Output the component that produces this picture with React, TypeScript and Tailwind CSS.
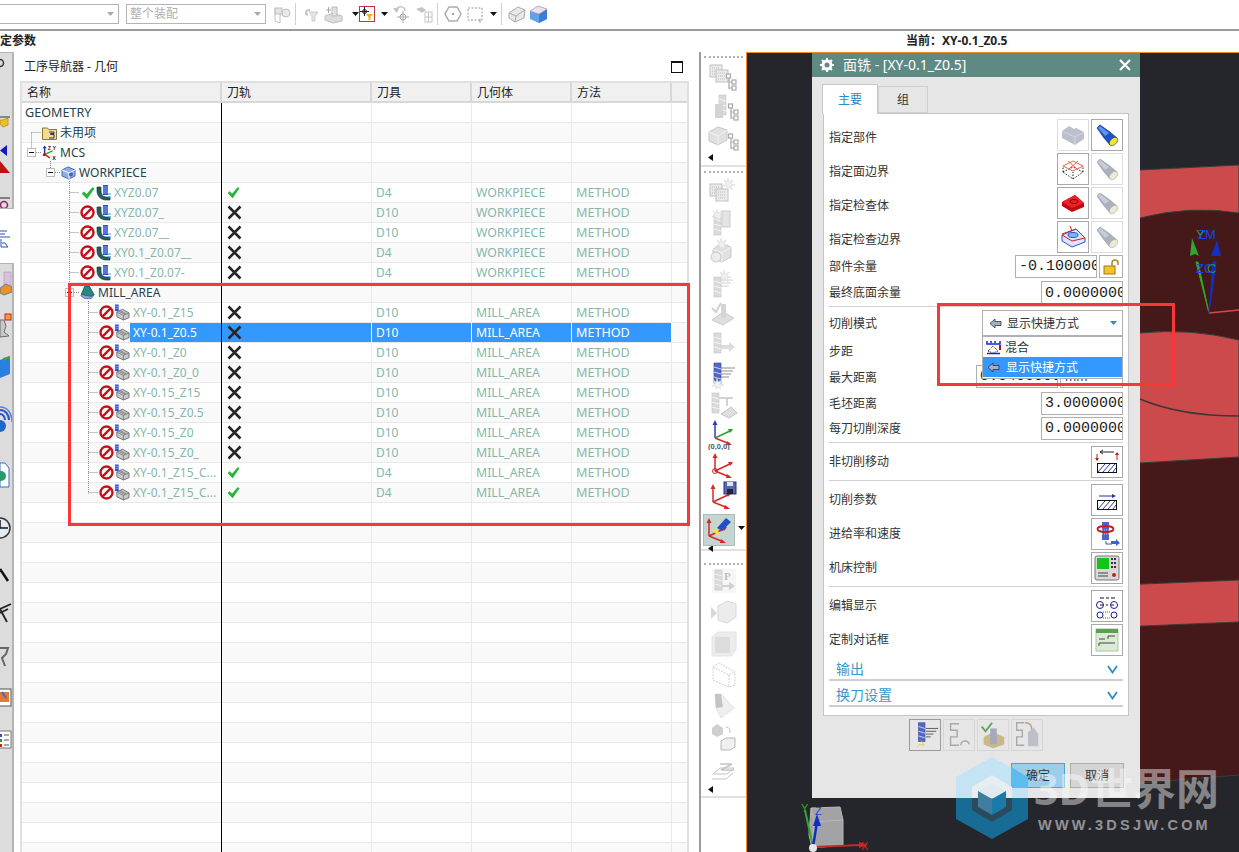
import type { ReactNode } from 'react';

type Kind = 'root' | 'lvl1' | 'work' | 'op' | 'mill' | 'sub';
type Status = 'ok' | 'no' | 'none';

type TreeRow = {
  kind: Kind;
  name: string;
  state?: Status;
  path?: Status;
  tool?: string;
  geom?: string;
  icon?: ReactNode;
  selected?: boolean;
};

const indent: Record<Kind, string> = {
  root: 'pl-[3px] pt-[1px] text-[12.6px]',
  lvl1: 'pl-[20px]',
  work: 'pl-[39px]',
  op: 'pl-[58px]',
  mill: 'pl-[58px]',
  sub: 'pl-[77px]',
};

const Prohibit = () => (
  <svg width="15" height="15" viewBox="0 0 15 15" className="flex-none">
    <circle cx="7.5" cy="7.5" r="6" fill="#fff" stroke="#c4121c" strokeWidth="2.4" />
    <path d="M3.4 11.6 11.6 3.4" stroke="#c4121c" strokeWidth="2.4" />
  </svg>
);

const GreenCheck = ({ size = 14 }: { size?: number }) => (
  <svg width={size} height={size} viewBox="0 0 14 14" className="flex-none">
    <path d="M1 7.5 3 5.8 5.5 8.6 11.5 1.5 13.2 2.5 6 12.8Z" fill="#1fbb35" stroke="#128a24" strokeWidth=".4" />
  </svg>
);

const Cross = () => (
  <svg width="15" height="15" viewBox="0 0 15 15" className="flex-none">
    <path d="M1.5 1.5 13.5 13.5M13.5 1.5 1.5 13.5" stroke="#262626" strokeWidth="2.5" />
  </svg>
);

const OpBlue = () => (
  <svg width="15" height="16" viewBox="0 0 15 16" className="flex-none">
    <path d="M1 2v4c0 5 4 9 9 9h4v-3h-4c-3 0-5-3-5-6V2Z" fill="#1f5f5c" stroke="#0d2f30" strokeWidth=".6" />
    <rect x="7" y="0" width="5" height="10" fill="#2b4fd0" />
    <path d="M7 2h5M7 4h5M7 6h5M7 8h5" stroke="#9fc0ff" strokeWidth=".7" />
    <path d="M12 9h3M12 12h3" stroke="#2aa0e8" strokeWidth="1" />
  </svg>
);

const OpGrey = () => (
  <svg width="16" height="17" viewBox="0 0 17 17" className="flex-none">
    <path d="M3 8 9 5 16 9 16 14 10 16.5 3 13Z" fill="#c9c9c9" stroke="#555" strokeWidth=".8" />
    <path d="M3 8 10 11.5 16 9M10 11.5V16.5M7 6.5 13 10M5.5 7.2 11.5 10.6" stroke="#666" strokeWidth=".7" fill="none" />
    <rect x="1" y="0" width="4" height="7" fill="#3a50c8" />
    <path d="M1 2h4M1 4h4" stroke="#a9bcff" strokeWidth=".7" />
  </svg>
);

const FolderIcon = () => (
  <svg width="15" height="14" viewBox="0 0 15 14" className="flex-none">
    <path d="M.5 2h5l1 1.5h8v10H.5Z" fill="#f4dc8a" stroke="#8a7a3a" />
    <path d="M7 6h5v1.5H8.5V8.5H12V12H7" fill="none" stroke="#26327a" strokeWidth="1" />
  </svg>
);

const McsIcon = () => (
  <svg width="15" height="16" viewBox="0 0 17 17" className="flex-none">
    <path d="M3 10V2" stroke="#1a2fb8" strokeWidth="1.6" />
    <path d="M3 0 .8 3h4.4Z" fill="#1a2fb8" />
    <path d="M3 10 12 6" stroke="#2aa52a" strokeWidth="1.6" />
    <path d="M3 10 9 14" stroke="#c41a1a" strokeWidth="1.6" />
    <rect x="1" y="9" width="3" height="3" fill="#c41a1a" />
    <text x="6.5" y="5" fontSize="6" fontWeight="700" fontFamily="Liberation Sans" fill="#111">Z</text>
    <text x="12" y="5.5" fontSize="6" fontWeight="700" fontFamily="Liberation Sans" fill="#111">Y</text>
    <text x="11.5" y="16" fontSize="6" fontWeight="700" fontFamily="Liberation Sans" fill="#111">X</text>
  </svg>
);

const WorkIcon = () => (
  <svg width="15" height="14" viewBox="0 0 15 14" className="flex-none">
    <path d="M1 4 7 1 14 4 14 10 8 13 1 10Z" fill="#8fb0e8" stroke="#4a68b0" />
    <path d="M1 4 8 7 14 4M8 7V13" stroke="#fff" strokeWidth="1" fill="none" />
    <circle cx="10" cy="8.5" r="2" fill="#3b62c4" />
  </svg>
);

const MillIcon = () => (
  <svg width="15" height="15" viewBox="0 0 16 15" className="flex-none">
    <path d="M1 11 5 1h5l5 9-3 4H5Z" fill="#8ea0e0" stroke="#3c4aa0" strokeWidth=".7" />
    <path d="M1.500 9.500 5 1h5l5 9-3 1.600-4-.6Z" fill="#28887f" stroke="#135a55" strokeWidth=".7" />
  </svg>
);

const rows: TreeRow[] = [
  { kind: 'root', name: 'GEOMETRY' },
  { kind: 'lvl1', name: '未用项', icon: <FolderIcon /> },
  { kind: 'lvl1', name: 'MCS', icon: <McsIcon /> },
  { kind: 'work', name: 'WORKPIECE', icon: <WorkIcon /> },
  { kind: 'op', name: 'XYZ0.07', state: 'ok', path: 'ok', tool: 'D4', geom: 'WORKPIECE' },
  { kind: 'op', name: 'XYZ0.07_', state: 'no', path: 'no', tool: 'D10', geom: 'WORKPIECE' },
  { kind: 'op', name: 'XYZ0.07__', state: 'no', path: 'no', tool: 'D10', geom: 'WORKPIECE' },
  { kind: 'op', name: 'XY0.1_Z0.07__', state: 'no', path: 'no', tool: 'D4', geom: 'WORKPIECE' },
  { kind: 'op', name: 'XY0.1_Z0.07-', state: 'no', path: 'no', tool: 'D4', geom: 'WORKPIECE' },
  { kind: 'mill', name: 'MILL_AREA', icon: <MillIcon /> },
  { kind: 'sub', name: 'XY-0.1_Z15', state: 'no', path: 'no', tool: 'D10', geom: 'MILL_AREA' },
  { kind: 'sub', name: 'XY-0.1_Z0.5', state: 'no', path: 'no', tool: 'D10', geom: 'MILL_AREA', selected: true },
  { kind: 'sub', name: 'XY-0.1_Z0', state: 'no', path: 'no', tool: 'D10', geom: 'MILL_AREA' },
  { kind: 'sub', name: 'XY-0.1_Z0_0', state: 'no', path: 'no', tool: 'D10', geom: 'MILL_AREA' },
  { kind: 'sub', name: 'XY-0.15_Z15', state: 'no', path: 'no', tool: 'D10', geom: 'MILL_AREA' },
  { kind: 'sub', name: 'XY-0.15_Z0.5', state: 'no', path: 'no', tool: 'D10', geom: 'MILL_AREA' },
  { kind: 'sub', name: 'XY-0.15_Z0', state: 'no', path: 'no', tool: 'D10', geom: 'MILL_AREA' },
  { kind: 'sub', name: 'XY-0.15_Z0_', state: 'no', path: 'no', tool: 'D10', geom: 'MILL_AREA' },
  { kind: 'sub', name: 'XY-0.1_Z15_C...', state: 'no', path: 'ok', tool: 'D4', geom: 'MILL_AREA' },
  { kind: 'sub', name: 'XY-0.1_Z15_C...', state: 'no', path: 'ok', tool: 'D4', geom: 'MILL_AREA' },
  ...Array.from({ length: 18 }, () => ({ kind: 'root' as Kind, name: '' })),
];

const Row = ({ row, idx }: { row: TreeRow; idx: number }) => {
  const base = row.selected ? 'bg-[#3399ff] text-white border-r-white' : 'text-[#86b6ac] border-r-[#e9e9e9]';
  const stripe = idx % 2 ? 'bg-[#f9f9f9]' : 'bg-white';
  const dataCell = `h-full flex items-center pl-[4px] border-r ${base}`;
  return (
    <div className={`grid grid-cols-[200px_150px_100px_100px_100px_1fr] h-[20px] border-b border-[#e9e9e9] ${stripe}`}>
      <div className={`flex items-center h-full min-w-0 ${indent[row.kind]}`}>
        {row.kind === 'op' && (
          <span className="flex items-center gap-[1px] mr-[3px]">
            {row.state === 'ok' ? <span className="w-[15px] flex justify-center"><GreenCheck /></span> : <Prohibit />}
            <OpBlue />
          </span>
        )}
        {row.kind === 'sub' && (
          <span className="flex items-center mr-0">
            <Prohibit />
            <OpGrey />
          </span>
        )}
        {row.icon && <span className="mr-[3px]">{row.icon}</span>}
        <span
          className={`flex-1 h-full flex items-center whitespace-nowrap overflow-hidden ${
            row.kind === 'sub' || row.kind === 'op' ? 'text-[#86b6ac]' : 'text-[#27424a]'
          } ${row.kind === 'sub' ? 'pl-[3px]' : ''} ${row.selected ? 'bg-[#3399ff] !text-white' : ''}`}
        >
          {row.name}
        </span>
      </div>
      <div className={`${dataCell} pl-[5px]`}>
        {row.path === 'ok' && <GreenCheck size={13} />}
        {row.path === 'no' && <Cross />}
      </div>
      <div className={dataCell}>{row.tool}</div>
      <div className={`${dataCell} pt-[2px] text-[12.3px]`}>{row.geom}</div>
      <div className={`${dataCell} pt-[2px] text-[12.6px]`}>{row.tool ? 'METHOD' : ''}</div>
      <div />
    </div>
  );
};

// dotted tree guides and +/- boxes, coordinates relative to the first row
const TreeGuides = () => {
  const box = (x: number, y: number, plus = false) => (
    <g>
      <rect x={x + 0.5} y={y + 0.5} width="8" height="8" fill="#fff" stroke="#bbb" />
      <path d={`M${x + 2} ${y + 4.5}h5`} stroke="#111" />
      {plus && <path d={`M${x + 4.5} ${y + 2}v5`} stroke="#888" />}
    </g>
  );
  return (
    <svg className="absolute left-0 top-0 pointer-events-none" width="200" height="420">
      <g stroke="#8c8c8c" strokeDasharray="1 1" fill="none">
        <path d="M9.5 29.5H19M9.5 29.5V45" />
        <path d="M14 49.5H19" />
        <path d="M28.5 58V65M33 69.5H38" />
        <path d="M47.5 78V185" />
        <path d="M47.5 89.5H57M47.5 109.5H57M47.5 129.5H57M47.5 149.5H57M47.5 169.5H57" />
        <path d="M52 189.5H57" />
        <path d="M66.5 198V390.5" />
        {[209, 229, 249, 269, 289, 309, 329, 349, 369, 389].map(y => (
          <path key={y} d={`M66.5 ${y + 0.5}H76`} />
        ))}
      </g>
      {box(5, 45)}
      {box(24, 65)}
      {box(43, 185, true)}
    </svg>
  );
};

const Tree = ({ x, y }: { x: number; y: number }) => (
  <g transform={`translate(${x} ${y})`} fill="#fff" stroke="#a8a8a8" strokeWidth="1.2">
    <path d="M3 4V15M3 8H7M3 14H7" fill="none" />
    <rect x="0.5" y="0" width="4" height="4" />
    <rect x="6" y="6" width="4" height="4" />
    <rect x="6" y="12" width="4" height="4" />
  </g>
);

const Burst = ({ x, y }: { x: number; y: number }) => (
  <path transform={`translate(${x} ${y})`} d="M6 0 7 4 11 2 9 6 13 7 9 8 10 12 7 9 5 12 5 8 1 8 4 6 2 2 5 4Z" fill="#efefef" stroke="#d2d2d2" strokeWidth=".5" />
);

const Grid = ({ x, y }: { x: number; y: number }) => (
  <g transform={`translate(${x} ${y})`}>
    <rect width="12" height="12" fill="#ebebeb" stroke="#c0c0c0" />
    <path d="M2 3h8M2 6h8M2 9h8" stroke="#b4b4b4" strokeDasharray="1 1" />
  </g>
);

const Bit = ({ x, y, blue = false }: { x: number; y: number; blue?: boolean }) => (
  <g transform={`translate(${x} ${y})`}>
    <rect width="7" height="20" fill={blue ? '#5368c4' : '#dadada'} stroke={blue ? '#33408c' : '#c4c4c4'} strokeWidth=".6" />
    <path d="M0 4 7 6M0 9 7 11M0 14 7 16" stroke={blue ? '#c4d0ff' : '#f4f4f4'} />
  </g>
);

const Box3d = ({ x, y }: { x: number; y: number }) => (
  <g transform={`translate(${x} ${y})`}>
    <path d="M0 5 9 0 18 3 18 13 9 18 0 14Z" fill="#e0e0e0" stroke="#c8c8c8" />
    <path d="M0 5 9 9 18 3M9 9V18" stroke="#f4f4f4" fill="none" />
  </g>
);

const Triad = ({ x = 4, y = 4, blue = false }: { x?: number; y?: number; blue?: boolean }) => (
  <g transform={`translate(${x} ${y})`} fill="none" strokeWidth="1.5">
    <path d="M3 18V3" stroke={blue ? '#2a3fc0' : '#d42a2a'} />
    <path d="M3 0 .5 5h5Z" fill={blue ? '#2a3fc0' : '#d42a2a'} stroke="none" />
    <path d="M3 18 20 10" stroke={blue ? '#2aa52a' : '#d42a2a'} />
    <path d="M21 9 16 9 18 13Z" fill={blue ? '#2aa52a' : '#d42a2a'} stroke="none" />
    <path d="M3 18 18 24" stroke="#d42a2a" />
    <path d="M20 25 15 21 14 25Z" fill="#d42a2a" stroke="none" />
  </g>
);

const G = ({ children, w = 32, h = 30 }: { children: ReactNode; w?: number; h?: number }) => (
  <svg width={w} height={h} viewBox={`0 0 ${w} ${h}`} className="flex-none">{children}</svg>
);

const sideOne: ReactNode[] = [
  <G><Grid x={3} y={3} /><Grid x={9} y={8} /><Tree x={19} y={12} /></G>,
  <G><Bit x={12} y={3} /><rect x="8" y="12" width="8" height="14" fill="#d4d4d4" /><Tree x={21} y={12} /></G>,
  <G><Box3d x={2} y={5} /><Tree x={21} y={12} /></G>,
];

const sideTwo: ReactNode[] = [
  <G><Grid x={3} y={8} /><Grid x={9} y={13} /><Burst x={15} y={2} /></G>,
  <G><Bit x={7} y={8} /><rect x="15" y="4" width="8" height="16" fill="#e4e4e4" stroke="#cdcdcd" /><Burst x={4} y={2} /></G>,
  <G><Box3d x={6} y={7} /><circle cx="9" cy="20" r="5" fill="#ececec" stroke="#c8c8c8" /><Burst x={8} y={1} /></G>,
  <G><Bit x={7} y={9} /><path d="M14 12h12M14 15h10M14 18h8" stroke="#d2d2d2" /><Burst x={11} y={2} /></G>,
  <G><path d="M5 22 16 14 27 20 16 27Z" fill="#dedede" stroke="#cdcdcd" /><rect x="14" y="6" width="5" height="14" fill="#d4d4d4" /><path d="M5 10 9 14 14 5" stroke="#d2d2d2" strokeWidth="2" fill="none" /></G>,
  <G><Bit x={7} y={4} /><path d="M14 16h8v-3l6 5-6 5v-3h-8Z" fill="#dcdcdc" /></G>,
  <G><Bit x={7} y={4} blue /><path d="M14 9h14M14 12h12M14 15h10M14 18h8" stroke="#8c8c8c" /><Burst x={4} y={19} /></G>,
  <G><Bit x={5} y={3} /><path d="M12 8h14M20 8v8" stroke="#d2d2d2" strokeWidth="2" /><path d="M14 24 24 17 30 23 22 28Z" fill="#dedede" stroke="#c4c4c4" /></G>,
  <G><Triad x={5} y={0} blue /><text x="1" y="29" fontSize="7.5" fontWeight="700" fontFamily="Liberation Sans" fill="#555">(0,0,0)</text></G>,
  <G><Triad x={5} y={2} /><circle cx="8" cy="20" r="2.5" fill="none" stroke="#d42a2a" /></G>,
  <G><Triad x={3} y={3} /><rect x="17" y="1" width="12" height="12" fill="#5468b4" stroke="#2a3570" /><rect x="20" y="1" width="6" height="4" fill="#dfe5f7" /><rect x="20" y="8" width="6" height="5" fill="#22262e" /></G>,
];

const sideThree: ReactNode[] = [
  <G><rect x="5" y="2" width="24" height="24" fill="#f6f6f6" /><Bit x={8} y={3} /><text x="17" y="13" fontSize="11" fontWeight="700" fontFamily="Liberation Serif" fill="#c0c0c0">P</text><path d="M15 18h7v-3l6 4-6 4v-3h-7Z" fill="#d0d0d0" /></G>,
  <G><path d="M4 9 10 15 4 21Z" fill="#d8d8d8" /><path d="M11 8 20 3 29 6 29 19 20 25 11 22Z" fill="#ececec" stroke="#d8d8d8" /></G>,
  <G><path d="M5 8 11 3H29V21L24 27H5Z" fill="#ececec" stroke="#e4e4e4" /><rect x="8" y="8" width="15" height="16" fill="#dcdcdc" /></G>,
  <G><path d="M6 7 12 3 28 12V25L22 27 6 20Z" fill="none" stroke="#cfcfcf" strokeDasharray="2 1" /><path d="M6 7 22 15V27M22 15 28 12" stroke="#cfcfcf" strokeDasharray="2 1" fill="none" /></G>,
  <G><path d="M8 3 14 3 27 17 14 27 9 17Z" fill="#efefef" stroke="#e0e0e0" /><path d="M8 3 14 3 16 16 9 17Z" fill="#c4c4c4" /></G>,
  <G><path d="M5 6 10 2 16 6V12L10 15 5 12Z" fill="#cfcfcf" /><path d="M19 5c4 0 4 4 4 6" stroke="#bbb" fill="none" /><path d="M14 19 19 16H28V25L23 28H14Z" fill="#efefef" stroke="#b9b9b9" /></G>,
  <G><path d="M6 21 20 21 27 15 13 15ZM5 26H19L26 20" fill="none" stroke="#c4c4c4" /><path d="M13 11H25L14 17H27" fill="none" stroke="#c4c4c4" strokeWidth="1.5" /></G>,
];

const ToolGroupArrow = () => (
  <svg width="5" height="7" viewBox="0 0 5 7" className="flex-none"><path d="M5 0V7L0 3.5Z" fill="#111" /></svg>
);

const Grip = () => (
  <div className="h-[2px] mx-[3px] border-t-2 border-dotted border-[#b0b0b0] flex-none" />
);

const DropArrow = ({ color = '#111' }: { color?: string }) => (
  <svg width="7" height="4" viewBox="0 0 7 4" className="flex-none"><path d="M0 0H7L3.5 4Z" fill={color} /></svg>
);

const Flash = ({ off = false }: { off?: boolean }) => (
  <svg width="24" height="24" viewBox="0 0 24 24">
    <path d="M2 5 5 2 15 9 22 15 15 22 9 15Z" fill={off ? '#aab0bc' : '#1c52c4'} stroke={off ? '#959aa8' : '#0c2470'} strokeWidth=".6" />
    <path d="M3 5 5 3 14 10 10 13Z" fill={off ? '#c8ccd4' : '#5e94f0'} />
    <ellipse cx="18.5" cy="18.5" rx="5" ry="3.2" transform="rotate(-45 18.5 18.5)" fill={off ? '#ecebd2' : '#f2e23a'} stroke={off ? '#a8a8a8' : '#333'} strokeWidth=".6" />
  </svg>
);

const Hatch = ({ y = 12 }: { y?: number }) => (
  <g>
    <rect x="3.5" y={y + 0.5} width="19" height="9" fill="#fff" stroke="#111" />
    <path d={`M4 ${y + 9}L11 ${y + 1}M9 ${y + 9}L16 ${y + 1}M14 ${y + 9}L21 ${y + 1}M19 ${y + 9}L22 ${y + 5}`} stroke="#2a3aa0" />
  </g>
);

const Ic = ({ children }: { children: ReactNode }) => (
  <svg width="26" height="26" viewBox="0 0 26 26">{children}</svg>
);

const IconBtn = ({ children, off = false }: { children: ReactNode; off?: boolean }) => (
  <div className={`w-[32px] h-[32px] flex-none flex items-center justify-center border bg-white ${off ? 'border-[#dcdcdc]' : 'border-[#a9a9a9]'}`}>
    {children}
  </div>
);

const ValueBox = ({ value, w = 'w-[82px]', h = 'h-[23px]' }: { value: string; w?: string; h?: string }) => (
  <div className={`${w} ${h} flex-none flex items-center pl-[3px] border border-[#b0b0b0] bg-white overflow-hidden whitespace-nowrap font-['Liberation_Mono',monospace] text-[15px] text-[#222]`}>
    {value}
  </div>
);

const BackArrow = () => (
  <svg width="13" height="11" viewBox="0 0 13 11" className="flex-none">
    <path d="M1 5.5 6 1V3.5H12V7.5H6V10Z" fill="#9db0c4" stroke="#333" strokeWidth=".8" />
  </svg>
);

const Chevron = () => (
  <svg width="11" height="9" viewBox="0 0 11 9"><path d="M1 1 5.5 7.5 10 1" fill="none" stroke="#2f8cc0" strokeWidth="1.8" /></svg>
);

const LabelRow = ({ label, children, className = '', labelClass = '' }: { label: string; children?: ReactNode; className?: string; labelClass?: string }) => (
  <div className={`flex items-center justify-between ${className}`}>
    <span className={labelClass}>{label}</span>
    {children && <div className="flex items-center gap-[2px]">{children}</div>}
  </div>
);

const Sep = ({ className = '' }: { className?: string }) => <div className={`h-[1px] flex-none bg-[#d0d0d0] ${className}`} />;

const Dialog = () => (
  <div className="absolute left-[65px] top-0 w-[328px] h-[745px] bg-[#e6e6e6] flex flex-col text-[#333]">
    <div className="h-[24px] flex-none bg-[#5f8a84] flex items-center pl-[8px] pr-[9px] text-white text-[14px]">
      <svg width="14" height="14" viewBox="0 0 14 14" className="mr-[9px]">
        <circle cx="7" cy="7" r="4" fill="none" stroke="#fff" strokeWidth="3" />
        <path d="M7 0v2.500M7 11.500V14M0 7h2.500M11.500 7H14M2 2l2 2M10 10l2 2M12 2l-2 2M4 10l-2 2" stroke="#fff" strokeWidth="2" />
      </svg>
      <span className="flex-1">面铣 - [XY-0.1_Z0.5]</span>
      <svg width="12" height="12" viewBox="0 0 12 12"><path d="M1 1 11 11M11 1 1 11" stroke="#fff" strokeWidth="2.2" /></svg>
    </div>

    <div className="ml-[10px] mt-[7px] flex items-end h-[30px] flex-none relative z-10 -mb-[1px]">
      <div className="w-[56px] h-[30px] bg-white border border-b-0 border-[#c8c8c8] flex items-center justify-center text-[#2d8bc4]">主要</div>
      <div className="w-[50px] h-[27px] mb-[1px] border border-[#d0d0d0] flex items-center justify-center">组</div>
    </div>

    <div className="ml-[11px] w-[306px] h-[603px] flex-none bg-white border border-[#c4c4c4] pt-[5px] px-[5px] flex flex-col">
      <LabelRow label="指定部件" className="h-[32px]" labelClass="pt-[6px]">
        <IconBtn off>
          <svg width="24" height="22" viewBox="0 0 24 22"><path d="M1 7 8 2 13 5 15 4 23 8V15L14 21 1 14Z" fill="#bcc0cc" /><path d="M1 7 14 13 23 8M14 13V21" stroke="#d6d8de" fill="none" /></svg>
        </IconBtn>
        <IconBtn><Flash /></IconBtn>
      </LabelRow>
      <LabelRow label="指定面边界" className="h-[32px] mt-[2px]" labelClass="pt-[6px]">
        <IconBtn>
          <svg width="24" height="24" viewBox="0 0 24 24"><path d="M2 15 12 10 22 15 12 22Z" fill="none" stroke="#222" strokeDasharray="1.500 1.500" /><path d="M2 15V9M22 15V9M12 22V15" stroke="#222" strokeDasharray="1.500 1.500" /><path d="M2 9 12 4 22 9 12 14ZM7 4 16 12M17 4 8 12" fill="none" stroke="#f0644a" /></svg>
        </IconBtn>
        <IconBtn off><Flash off /></IconBtn>
      </LabelRow>
      <LabelRow label="指定检查体" className="h-[32px] mt-[2px]" labelClass="pt-[6px]">
        <IconBtn>
          <svg width="24" height="20" viewBox="0 0 24 20"><path d="M1 9 14 2 23 10V14L11 19 1 13Z" fill="#c00a12" /><path d="M1 9 14 2 23 10 11 15Z" fill="#ee2028" /><ellipse cx="13" cy="8.500" rx="4" ry="2" fill="none" stroke="#7a0a0a" /></svg>
        </IconBtn>
        <IconBtn off><Flash off /></IconBtn>
      </LabelRow>
      <LabelRow label="指定检查边界" className="h-[32px] mt-[2px]" labelClass="pt-[6px]">
        <IconBtn>
          <svg width="26" height="24" viewBox="0 0 26 24"><path d="M2 10 16 4 25 13V17L12 22 2 16Z" fill="#dbe6fb" stroke="#2a52d0" /><path d="M2 10 12 16 25 13" fill="none" stroke="#d81e1e" /><path d="M10 1 12 6M2 9 16 4 25 13" fill="none" stroke="#d81e1e" /><ellipse cx="13" cy="10" rx="5" ry="2.500" fill="#8fb0f0" stroke="#2a52d0" /></svg>
        </IconBtn>
        <IconBtn off><Flash off /></IconBtn>
      </LabelRow>

      <LabelRow label="部件余量" className="h-[23px] mt-[2px]">
        <ValueBox value="-0.1000000" />
        <div className="w-[24px] h-[23px] border border-[#b0b0b0] flex items-center justify-center">
          <svg width="16" height="16" viewBox="0 0 16 16"><path d="M9 7V4a3 3 0 0 1 6 0v2" fill="none" stroke="#b08a20" strokeWidth="1.500" /><rect x="1" y="7" width="11" height="8" fill="#f2c428" stroke="#a07c14" /></svg>
        </div>
      </LabelRow>
      <LabelRow label="最终底面余量" className="h-[24px] mt-[3px]">
        <ValueBox value="0.0000000" h="h-[24px]" />
      </LabelRow>
      <Sep className="mt-[1px]" />

      <LabelRow label="切削模式" className="h-[26px] mt-[3px]" labelClass="pt-[2px]">
        <div className="relative w-[141px] h-[26px] border border-[#b0b0b0] flex items-center pl-[6px] pr-[5px]">
          <BackArrow />
          <span className="flex-1 pl-[5px] pt-[2px]">显示快捷方式</span>
          <DropArrow color="#2f8cc0" />
          <div className="absolute z-20 -left-[1px] top-[25px] w-[141px] h-[43px] bg-white border border-[#b0b0b0]">
            <div className="h-[20px] flex items-center pl-[3px]">
              <svg width="15" height="15" viewBox="0 0 15 15" className="flex-none mr-[4px]"><path d="M1 1V4H14V1M5 1V3M9 1V3M1 13.500H14" stroke="#1620e0" strokeWidth="1.500" fill="none" /><path d="M2 11 7 6 12 11 7 13Z" fill="#fff" stroke="#111" strokeDasharray="1 1" /><path d="M14 5V10" stroke="#b01030" strokeWidth="2" /></svg>
              <span className="pt-[2px]">混合</span>
            </div>
            <div className="h-[20px] bg-[#3399ff] text-white flex items-center pl-[4px]">
              <BackArrow />
              <span className="pl-[6px] pt-[2px]">显示快捷方式</span>
            </div>
          </div>
        </div>
      </LabelRow>
      <LabelRow label="步距" className="h-[26px] mt-[2px]" labelClass="pt-[2px]" />
      <LabelRow label="最大距离" className="h-[23px] mt-[1px]" labelClass="pt-[2px]">
        <ValueBox value="0.0400000" />
        <div className="w-[63px] h-[23px] border border-[#b0b0b0] flex items-center justify-between pl-[4px] pr-[5px]">
          <span>mm</span>
          <DropArrow />
        </div>
      </LabelRow>
      <LabelRow label="毛坯距离" className="h-[23px] mt-[4px]">
        <ValueBox value="3.0000000" />
      </LabelRow>
      <LabelRow label="每刀切削深度" className="h-[23px] mt-[2px]">
        <ValueBox value="0.0000000" />
      </LabelRow>
      <Sep className="mt-[2px]" />

      <LabelRow label="非切削移动" className="h-[32px] mt-[3px]">
        <IconBtn>
          <Ic><Hatch y={14} /><path d="M6 3H20M6 3l3-2M6 3l3 2" fill="none" stroke="#222" /><path d="M3 5V11M23 11V5" stroke="#b81a1a" /><path d="M3 12 1 9H5ZM23 3 21 6H25Z" fill="#b81a1a" /></Ic>
        </IconBtn>
      </LabelRow>
      <Sep className="mt-[2px]" />
      <LabelRow label="切削参数" className="h-[32px] mt-[3px]">
        <IconBtn>
          <Ic><Hatch y={13} /><path d="M5 9H20" stroke="#1f2fb0" /><path d="M22 9 18 7V11Z" fill="#1f2fb0" /></Ic>
        </IconBtn>
      </LabelRow>
      <LabelRow label="进给率和速度" className="h-[32px] mt-[2px]">
        <IconBtn>
          <Ic><rect x="8" y="1" width="7" height="18" fill="#4f62c8" /><path d="M8 5h7M8 9h7M8 13h7" stroke="#c5d0ff" strokeDasharray="1 1" /><ellipse cx="11.500" cy="8" rx="8" ry="3" fill="none" stroke="#c81e1e" strokeWidth="1.800" /><path d="M12 20V23H18" stroke="#3b4fc0" fill="none" /><path d="M17 20H22V18L26 22 22 25V23H17Z" fill="#3b62d8" /></Ic>
        </IconBtn>
      </LabelRow>
      <LabelRow label="机床控制" className="h-[32px] mt-[2px]">
        <IconBtn>
          <Ic><rect x="1" y="1" width="24" height="24" rx="2" fill="#d8d8d8" stroke="#777" /><rect x="3" y="3" width="12" height="11" fill="#16c416" /><path d="M17 4h6M17 8h6M17 12h6" stroke="#333" strokeWidth="2" strokeDasharray="2 1" /><path d="M4 18h10M4 21h10" stroke="#444" /><circle cx="20" cy="20" r="2" fill="#c81e1e" /></Ic>
        </IconBtn>
      </LabelRow>
      <Sep className="mt-[2px]" />
      <LabelRow label="编辑显示" className="h-[32px] mt-[3px]">
        <IconBtn>
          <Ic><path d="M6 5h4M12 5h3M17 5h4" stroke="#111" /><circle cx="6" cy="12" r="3.500" fill="none" stroke="#1c1c90" /><circle cx="20" cy="12" r="3.500" fill="none" stroke="#1c1c90" /><path d="M6 12H9M12 12h2M17 12h3" stroke="#111" /><circle cx="6" cy="22" r="3" fill="none" stroke="#1c1c90" /><circle cx="20" cy="22" r="3" fill="none" stroke="#1c1c90" /><path d="M9 19H17M9 25H17" stroke="#d81e1e" strokeDasharray="1 1" /></Ic>
        </IconBtn>
      </LabelRow>
      <LabelRow label="定制对话框" className="h-[32px] mt-[2px]">
        <IconBtn>
          <Ic><rect x="2" y="2" width="22" height="22" fill="#dcebd4" stroke="#a9c8a0" /><rect x="2" y="2" width="22" height="4" fill="#5aa050" /><path d="M5 12H11M14 12V9H21M5 19V16H21" stroke="#444" fill="none" /></Ic>
        </IconBtn>
      </LabelRow>

      <div className="h-[24px] mt-[1px] pl-[7px] pr-[5px] pt-[2px] flex items-center justify-between border-b-2 border-[#cfcfcf] text-[14px] text-[#3a97c9]">
        <span>输出</span>
        <Chevron />
      </div>
      <div className="h-[26px] pl-[7px] pr-[5px] pt-[4px] flex items-center justify-between border-b-2 border-[#cfcfcf] text-[14px] text-[#3a97c9]">
        <span>换刀设置</span>
        <Chevron />
      </div>
    </div>

    <div className="mt-[3px] ml-[97px] flex gap-[2px]">
      <IconBar active>
        <Bit x={9} y={3} blue />
        <path d="M17 9H30M17 12H28M17 15H25M17 18H22" stroke="#555" />
        <path d="M12 22 15 27 10 26 8 29" stroke="#e8d040" fill="none" />
      </IconBar>
      <IconBar>
        <path d="M16 4H7V11H14V18H7V27H16" fill="none" stroke="#a8a8a8" strokeWidth="1.500" />
        <path d="M18 27C18 21 26 21 27 26" fill="none" stroke="#a8a8a8" strokeWidth="1.500" />
      </IconBar>
      <IconBar>
        <path d="M6 18 16 13 28 18V26L16 30 6 26Z" fill="#c9b88a" />
        <rect x="13" y="9" width="7" height="17" fill="#a4a9bc" />
        <path d="M4 7 8 12 15 3" fill="none" stroke="#63a35c" strokeWidth="2" />
      </IconBar>
      <IconBar>
        <path d="M13 3H5V11H11V18H5V27H13" fill="none" stroke="#a8a8a8" strokeWidth="1.500" />
        <path d="M17 13 23 8 28 15V28H17Z" fill="#bdc0c8" />
        <path d="M14 3C20 3 21 6 21 10" fill="none" stroke="#c09a8a" strokeWidth="1.500" />
      </IconBar>
    </div>

    <div className="mt-[12px] ml-[199px] flex gap-[5px]">
      <div className="w-[54px] h-[25px] flex items-center justify-center bg-[#9ccde9] border border-[#4ea3d6]">确定</div>
      <div className="w-[54px] h-[25px] flex items-center justify-center bg-[#d4d4d4] border border-[#adadad]">取消</div>
    </div>
  </div>
);

function IconBar({ children, active = false }: { children: ReactNode; active?: boolean }) {
  return (
    <div className={`w-[32px] h-[32px] flex items-center justify-center border ${active ? 'border-[#9a9a9a]' : 'border-[#d6d6d6]'}`}>
      <svg width="30" height="30" viewBox="0 0 32 32">{children}</svg>
    </div>
  );
}

const Scene = () => (
  <svg className="absolute inset-0" width="492" height="799" viewBox="747 53 492 799">
    <path d="M1000 176 1140 170 1239 165V775L1140 783 1000 792Z" fill="#451819" />
    <path d="M1000 176 1140 170 1239 165V213Q1190 205 1140 218L1000 250Z" fill="#cc4a4b" stroke="#3c3c3c" />
    <path d="M1000 345 1140 333Q1190 328 1239 340V457L1140 463 1000 470Z" fill="#cc4a4b" stroke="#3c3c3c" />
    <path d="M1140 399Q1180 416 1239 416" fill="none" stroke="#3a3638" strokeWidth="1.500" />
    <path d="M1000 590 1239 580V622L1000 632Z" fill="#cc4a4b" stroke="#3c3c3c" />
    <path d="M1000 792 1140 783 1239 775" fill="none" stroke="#3c3c3c" />

    <path d="M1209 313 1239 310" stroke="#d84a4a" strokeWidth="1.500" />
    <path d="M1209 313 1198 262 1196 262Z" fill="#2fa82f" stroke="#2fa82f" />
    <path d="M1192 238 1199 256 1195 254 1190 256Z" fill="#2fa82f" />
    <path d="M1209 313 1216 262 1213 262Z" fill="#1230c0" stroke="#1230c0" />
    <path d="M1217 240 1221 256 1211 256Z" fill="#1230c0" />
    <g fontFamily="Liberation Sans" fontSize="13">
      <text x="1196" y="239" fill="#2e9a36">Y</text>
      <text x="1205" y="239" fill="#1a44e0">M</text>
      <text x="1198" y="239" fill="#1a44e0">Z</text>
      <text x="1207" y="273" fill="#2e9a36">C</text>
      <text x="1196" y="273" fill="#1a44e0">ZC</text>
    </g>

    <path d="M811 808 840 807 843 820 843 845 812 848 809 835Z" fill="#a3a3a5" stroke="#b8b8b8" />
    <path d="M811 808 814 822 843 820M814 822 812 848" fill="none" stroke="#b8b8b8" />
    <path d="M815 847 860 845" stroke="#c42828" strokeWidth="2" />
    <path d="M859 842 868 845 859 848Z" fill="#c42828" />
    <path d="M813 847 805 810" stroke="#2fa82f" strokeWidth="2" />
    <path d="M813 847 817 822" stroke="#1230c0" strokeWidth="2.500" />
    <path d="M817 814 821 826 813 826Z" fill="#1230c0" />
    <circle cx="813" cy="848" r="4" fill="#e6e6e6" />
    <g fontFamily="Liberation Sans" fontSize="11">
      <text x="801" y="812" fill="#2fa82f">Y</text>
      <text x="815" y="815" fill="#2244e0">Z</text>
      <text x="861" y="850" fill="#d42a2a">X</text>
    </g>
  </svg>
);

const Watermark = () => (
  <>
    <svg className="absolute left-[956px] top-[757px] pointer-events-none" width="72" height="82" viewBox="0 0 72 82">
      <path d="M36 0 72 20V41H0V20Z" fill="#c4e3f3" />
      <path d="M0 41H72V62L36 82 0 62Z" fill="#176c95" />
      <path d="M55 10 72 20V31H55Z" fill="#5cbcee" />
      <path d="M16 30 36 18 56 30V41H16Z" fill="#e6eef2" />
      <path d="M16 41H56V53L36 65 16 53Z" fill="#2b4a5c" />
      <path d="M36 26 50 34 36 42 22 34Z" fill="#dfeaf0" />
      <path d="M22 34 36 42V58L22 50Z" fill="#3f7c9e" />
      <path d="M50 34 36 42V58L50 50Z" fill="#1a7aa8" />
    </svg>
    <div className="absolute left-[1034px] top-[761px] text-[43px] leading-[56px] font-bold whitespace-nowrap text-white/45 pointer-events-none">3D世界网</div>
    <div className="absolute left-[1038px] top-[816px] text-[14.5px] leading-[18px] tracking-[3.2px] font-bold whitespace-nowrap text-white/50 font-['Liberation_Sans',sans-serif] pointer-events-none">WWW.3DSJW.COM</div>
  </>
);

export default function App() {
  return (
    <div className="relative w-[1239px] h-[852px] overflow-hidden bg-white flex flex-col text-[12px] leading-none text-[#333] font-['Noto_Sans','Noto_Sans_CJK_SC',sans-serif]">
      {/* top toolbar */}
      <div className="h-[31px] flex-none border-b-2 border-[#9c9c9c] flex items-center pb-[1px]">
        <div className="w-[120px] h-[20px] -ml-px border border-[#b4b4b4] flex items-center justify-end pr-[4px]"><DropArrow color="#a8a8a8" /></div>
        <div className="ml-[7px] w-[140px] h-[20px] border border-[#b4b4b4] flex items-center justify-between pl-[3px] pr-[4px] text-[#b0b0b0]">
          整个装配
          <DropArrow color="#a8a8a8" />
        </div>
        <div className="ml-[6px] flex items-center">
          <G w={20} h={20}><rect x="3" y="4" width="7" height="6" fill="#e4e4e4" stroke="#c0c0c0" /><path d="M3 4V17L8 19V10" fill="none" stroke="#c0c0c0" /><circle cx="14" cy="9" r="4" fill="#e8e8e8" stroke="#c0c0c0" /></G>
          <div className="ml-[3px] w-px h-[22px] bg-[#d0d0d0]" />
          <span className="ml-[5px]"><G w={20} h={20}><path d="M9 6C4 6 4 10 7 11" fill="none" stroke="#c4c4c4" strokeWidth="2" /><path d="M8 8H17L14 12V17H11V12Z" fill="#e4e4e4" stroke="#cdcdcd" /></G></span>
          <span className="ml-[2px]"><G w={22} h={20}><path d="M2 12 10 9 19 12V17L10 19 2 16Z" fill="#dcdcdc" stroke="#c0c0c0" /><rect x="9" y="3" width="5" height="9" fill="#e0e0e0" stroke="#bcbcbc" /><path d="M3 6H8M5.500 3V9" stroke="#aaa" /></G></span>
          <span className="ml-[7px]"><DropArrow /></span>
          <div className="w-[16px] h-[16px] border border-[#c8323c] flex-none">
            <svg width="14" height="14" viewBox="0 0 14 14"><circle cx="4.500" cy="4.500" r="2" fill="none" stroke="#222" /><path d="M4.500 0V9M0 4.500H9" stroke="#222" /><path d="M6 7H13L10.500 10V13H8.500V10Z" fill="#f0b020" /></svg>
          </div>
          <span className="ml-[6px]"><DropArrow /></span>
          <span className="ml-[4px]"><G w={20} h={20}><path d="M3 7C6 1 13 2 13 7" fill="none" stroke="#c4c4c4" strokeWidth="1.500" /><path d="M1 4 5 9 7 4Z" fill="#c4c4c4" /><circle cx="11" cy="13" r="3" fill="none" stroke="#aaa" /><path d="M11 7V19M5 13H17" stroke="#aaa" /></G></span>
          <span className="ml-[2px]"><G w={20} h={20}><path d="M2 5 8 3 12 6 8 9Z" fill="#c4c4c4" /><rect x="11" y="8" width="7" height="10" fill="none" stroke="#c4c4c4" /><path d="M14.500 8V18M11 13H18" stroke="#c4c4c4" /></G></span>
          <div className="ml-[3px] w-px h-[22px] bg-[#d0d0d0]" />
          <span className="ml-[6px]"><G w={18} h={18}><path d="M5 2H13L17 9 13 16H5L1 9Z" fill="none" stroke="#adadad" strokeWidth="1.500" /><circle cx="9" cy="9" r="1" fill="#888" /></G></span>
          <span className="ml-[4px]"><G w={18} h={18}><rect x="2" y="3" width="14" height="12" fill="none" stroke="#999" strokeDasharray="2 1.500" /><path d="M14 14V18" stroke="#999" /></G></span>
          <span className="ml-[6px]"><DropArrow /></span>
          <div className="ml-[4px] w-px h-[22px] bg-[#d0d0d0]" />
          <span className="ml-[5px]"><G w={20} h={20}><path d="M2 9 11 3 18 6 17 14 8 18 2 14Z" fill="#e8e8e8" stroke="#aaa" /><path d="M2 9 9 12 18 6M9 12 8 18" fill="none" stroke="#aaa" /></G></span>
          <span className="ml-[2px]"><G w={20} h={20}><path d="M1 7 9 2 18 5V15L10 19 1 15Z" fill="#5ea2e8" /><path d="M10 10 18 5V15L10 19Z" fill="#3f7cd8" /><path d="M1 7 9 2 18 5 10 10Z" fill="#dfe6f4" stroke="#e08090" strokeWidth=".6" /></G></span>
        </div>
      </div>

      {/* status row */}
      <div className="h-[21px] flex-none relative font-bold overflow-hidden">
        <span className="absolute -left-[12px] top-[4px] whitespace-nowrap text-[#222]">指定参数</span>
        <span className="absolute left-[906px] top-[4px] whitespace-nowrap text-[#222]">当前：XY-0.1_Z0.5</span>
      </div>

      <div className="flex-1 flex min-h-0">
        {/* left icon strip, cut off by the window edge */}
        <div className="w-[14px] flex-none flex flex-col">
          <div className="h-[157px] flex-none bg-[#dcdcdc] border-r-2 border-t border-b border-[#b4b4b4] overflow-hidden">
            <svg width="12" height="157" viewBox="0 0 12 157">
              <circle cx="0" cy="10" r="3.500" fill="none" stroke="#333" strokeWidth="1.500" />
              <path d="M0 64H10" stroke="#333" />
              <path d="M3 67 8 65V72L3 74 0 71V67Z" fill="#f0c020" stroke="#a07814" strokeWidth=".6" />
              <path d="M7 92V103L0 97.500Z" fill="#1418c0" />
              <path d="M0 108 10 120H0Z" fill="#c01010" />
              <path d="M0 145H10" stroke="#222" />
              <circle cx="4" cy="152" r="3.500" fill="none" stroke="#902060" strokeWidth="1.500" />
            </svg>
          </div>
          <div className="h-[54px] flex-none overflow-hidden">
            <svg width="12" height="54" viewBox="0 0 12 54"><path d="M0 22H7M0 25H5M0 28H10" stroke="#2a52c0" /><path d="M1 30V38H8L5 34H2" fill="none" stroke="#2a52c0" /></svg>
          </div>
          <div className="flex-1 bg-[#dcdcdc] border-r-2 border-t border-[#b4b4b4] overflow-hidden">
            {/* y in this strip = page y - 264 */}
            <svg width="12" height="590" viewBox="0 0 12 590">
              <path d="M4 8H11V22H4Z" fill="#d8c0d8" stroke="#b090c0" strokeWidth=".6" />
              <path d="M0 24 6 20 12 23V28L4 31 0 29Z" fill="#f09020" stroke="#2a70c0" strokeWidth=".7" />
              <rect x="5" y="50" width="6" height="6" fill="#f0a030" stroke="#d02020" />
              <path d="M0 56H4L6 62 4 68 9 72 0 73Z" fill="#c8c8c8" stroke="#555" strokeWidth=".8" />
              <path d="M0 96 10 92V110L0 114Z" fill="#2a80e0" />
              <path d="M3 94 10 92V95L3 97Z" fill="#40a040" />
              <path d="M0 146C5 146 9 150 9 156" fill="none" stroke="#2a52d0" strokeWidth="2" />
              <path d="M0 150C3 150 5 153 5 156" fill="none" stroke="#2a52d0" strokeWidth="2" />
              <path d="M0 143C8 143 12 150 12 158" fill="none" stroke="#5a82e0" strokeWidth="1.500" />
              <circle cx="0" cy="162" r="6" fill="#1a68c8" />
              <path d="M0 199H5L9 204V223H0Z" fill="#fff" stroke="#3a70c0" /><circle cx="1" cy="212" r="5" fill="#2a9a6a" />
              <circle cx="0" cy="264" r="10" fill="#e4eaf4" stroke="#333" strokeWidth="1.500" /><path d="M0 264H8M0 256V264" stroke="#111" strokeWidth="1.500" />
              <path d="M0 305 8 317" stroke="#111" strokeWidth="2.500" />
              <path d="M0 345 7 358M0 345 11 340M0 349 8 345" stroke="#222" strokeWidth="1.800" />
              <path d="M0 384 8 384 6 390 2 394 5 402" fill="none" stroke="#666" strokeWidth="2" />
              <rect x="-4" y="425" width="15" height="17" fill="#fff" stroke="#555" /><path d="M0 428H9V438H0Z" fill="#e07a3a" /><path d="M2 428 6 434" stroke="#2a70d0" strokeWidth="2" />
              <rect x="-4" y="467" width="15" height="17" fill="#fff" stroke="#777" /><rect x="0" y="470" width="2" height="3" fill="#2a52d0" /><rect x="0" y="475" width="2" height="3" fill="#2aa02a" /><rect x="0" y="480" width="2" height="3" fill="#d02020" /><path d="M4 471H9M4 476H9M4 481H9" stroke="#555" />
            </svg>
          </div>
        </div>

        {/* operation navigator */}
        <div className="w-[685px] flex-none flex flex-col min-h-0">
          <div className="h-[29px] flex-none flex items-center justify-between pl-[10px] pr-[16px] pt-[1px] text-[#222]">
            <span>工序导航器 - 几何</span>
            <div className="w-[12px] h-[12px] border border-t-2 border-[#111]" />
          </div>
          <div className="ml-[6px] w-[669px] flex-1 min-h-0 border-t-2 border-x-2 border-[#e0e0e0] flex flex-col overflow-hidden">
            <div className="h-[20px] flex-none grid grid-cols-[200px_150px_100px_100px_100px_1fr] bg-[#f0f0f0] border-b-2 border-[#d8d8d8] text-[#222]">
              {['名称', '刀轨', '刀具', '几何体', '方法', ''].map(h => (
                <div key={h} className="flex items-center pl-[5px] pt-[1px] border-r-2 border-[#d8d8d8] last:border-r-0">{h}</div>
              ))}
            </div>
            <div className="relative flex-1 min-h-0">
              {rows.map((r, i) => <Row key={i} row={r} idx={i} />)}
              <TreeGuides />
              <div className="absolute left-[199px] top-0 bottom-0 w-px bg-black" />
            </div>
          </div>
        </div>

        {/* vertical command strip */}
        <div className="w-[47px] flex-none border-l-2 border-[#9c9c9c] flex flex-col">
          <div className="h-[115px] flex-none border-b-2 border-[#e0e0e0] pt-[4px] flex flex-col">
            <Grip />
            <div className="ml-[6px] mt-[4px] flex flex-col">
              {sideOne.map((el, i) => <div key={i}>{el}</div>)}
            </div>
            <div className="ml-[7px] mt-auto mb-[4px]"><ToolGroupArrow /></div>
          </div>
          <div className="h-[384px] flex-none border-b-2 border-[#e0e0e0] pt-[4px] flex flex-col">
            <Grip />
            <div className="ml-[6px] mt-[3px] flex flex-col gap-[0.5px]">
              {sideTwo.map((el, i) => <div key={i}>{el}</div>)}
            </div>
            <div className="relative ml-[2px] mt-[3px] w-[32px] h-[32px] bg-[#c5d6d2] border border-[#a9bcb8] flex-none">
              <svg width="30" height="30" viewBox="0 0 30 30">
                <Triad x={2} y={3} />
                <path d="M13 13 22 3 27 7 18 16Z" fill="#2050c8" />
                <path d="M11 13 16 18 13 20 9 16Z" fill="#f2e23a" />
              </svg>
              <span className="absolute -right-[11px] top-[11px]"><DropArrow /></span>
            </div>
            <div className="ml-[7px] mt-[-1px]"><ToolGroupArrow /></div>
          </div>
          <div className="h-[247px] flex-none border-b-2 border-[#e0e0e0] pt-[12px] flex flex-col">
            <Grip />
            <div className="ml-[6px] mt-[2px] flex flex-col gap-[1px]">
              {sideThree.map((el, i) => <div key={i}>{el}</div>)}
            </div>
            <div className="ml-[7px] mt-[3px]"><ToolGroupArrow /></div>
          </div>
        </div>

        {/* graphics window */}
        <div className="relative flex-1 min-w-0 bg-[#25262b] border-l border-t border-[#f28c28]">
          <Scene />
          <Dialog />
        </div>
      </div>

      <Watermark />

      {/* red annotation frames on top of the capture */}
      <div className="absolute left-[68px] top-[283px] w-[622px] h-[243px] border-[3px] border-[#f83838] pointer-events-none" />
      <div className="absolute left-[937px] top-[303px] w-[238px] h-[83px] border-[3px] border-[#f83838] pointer-events-none" />
    </div>
  );
}
